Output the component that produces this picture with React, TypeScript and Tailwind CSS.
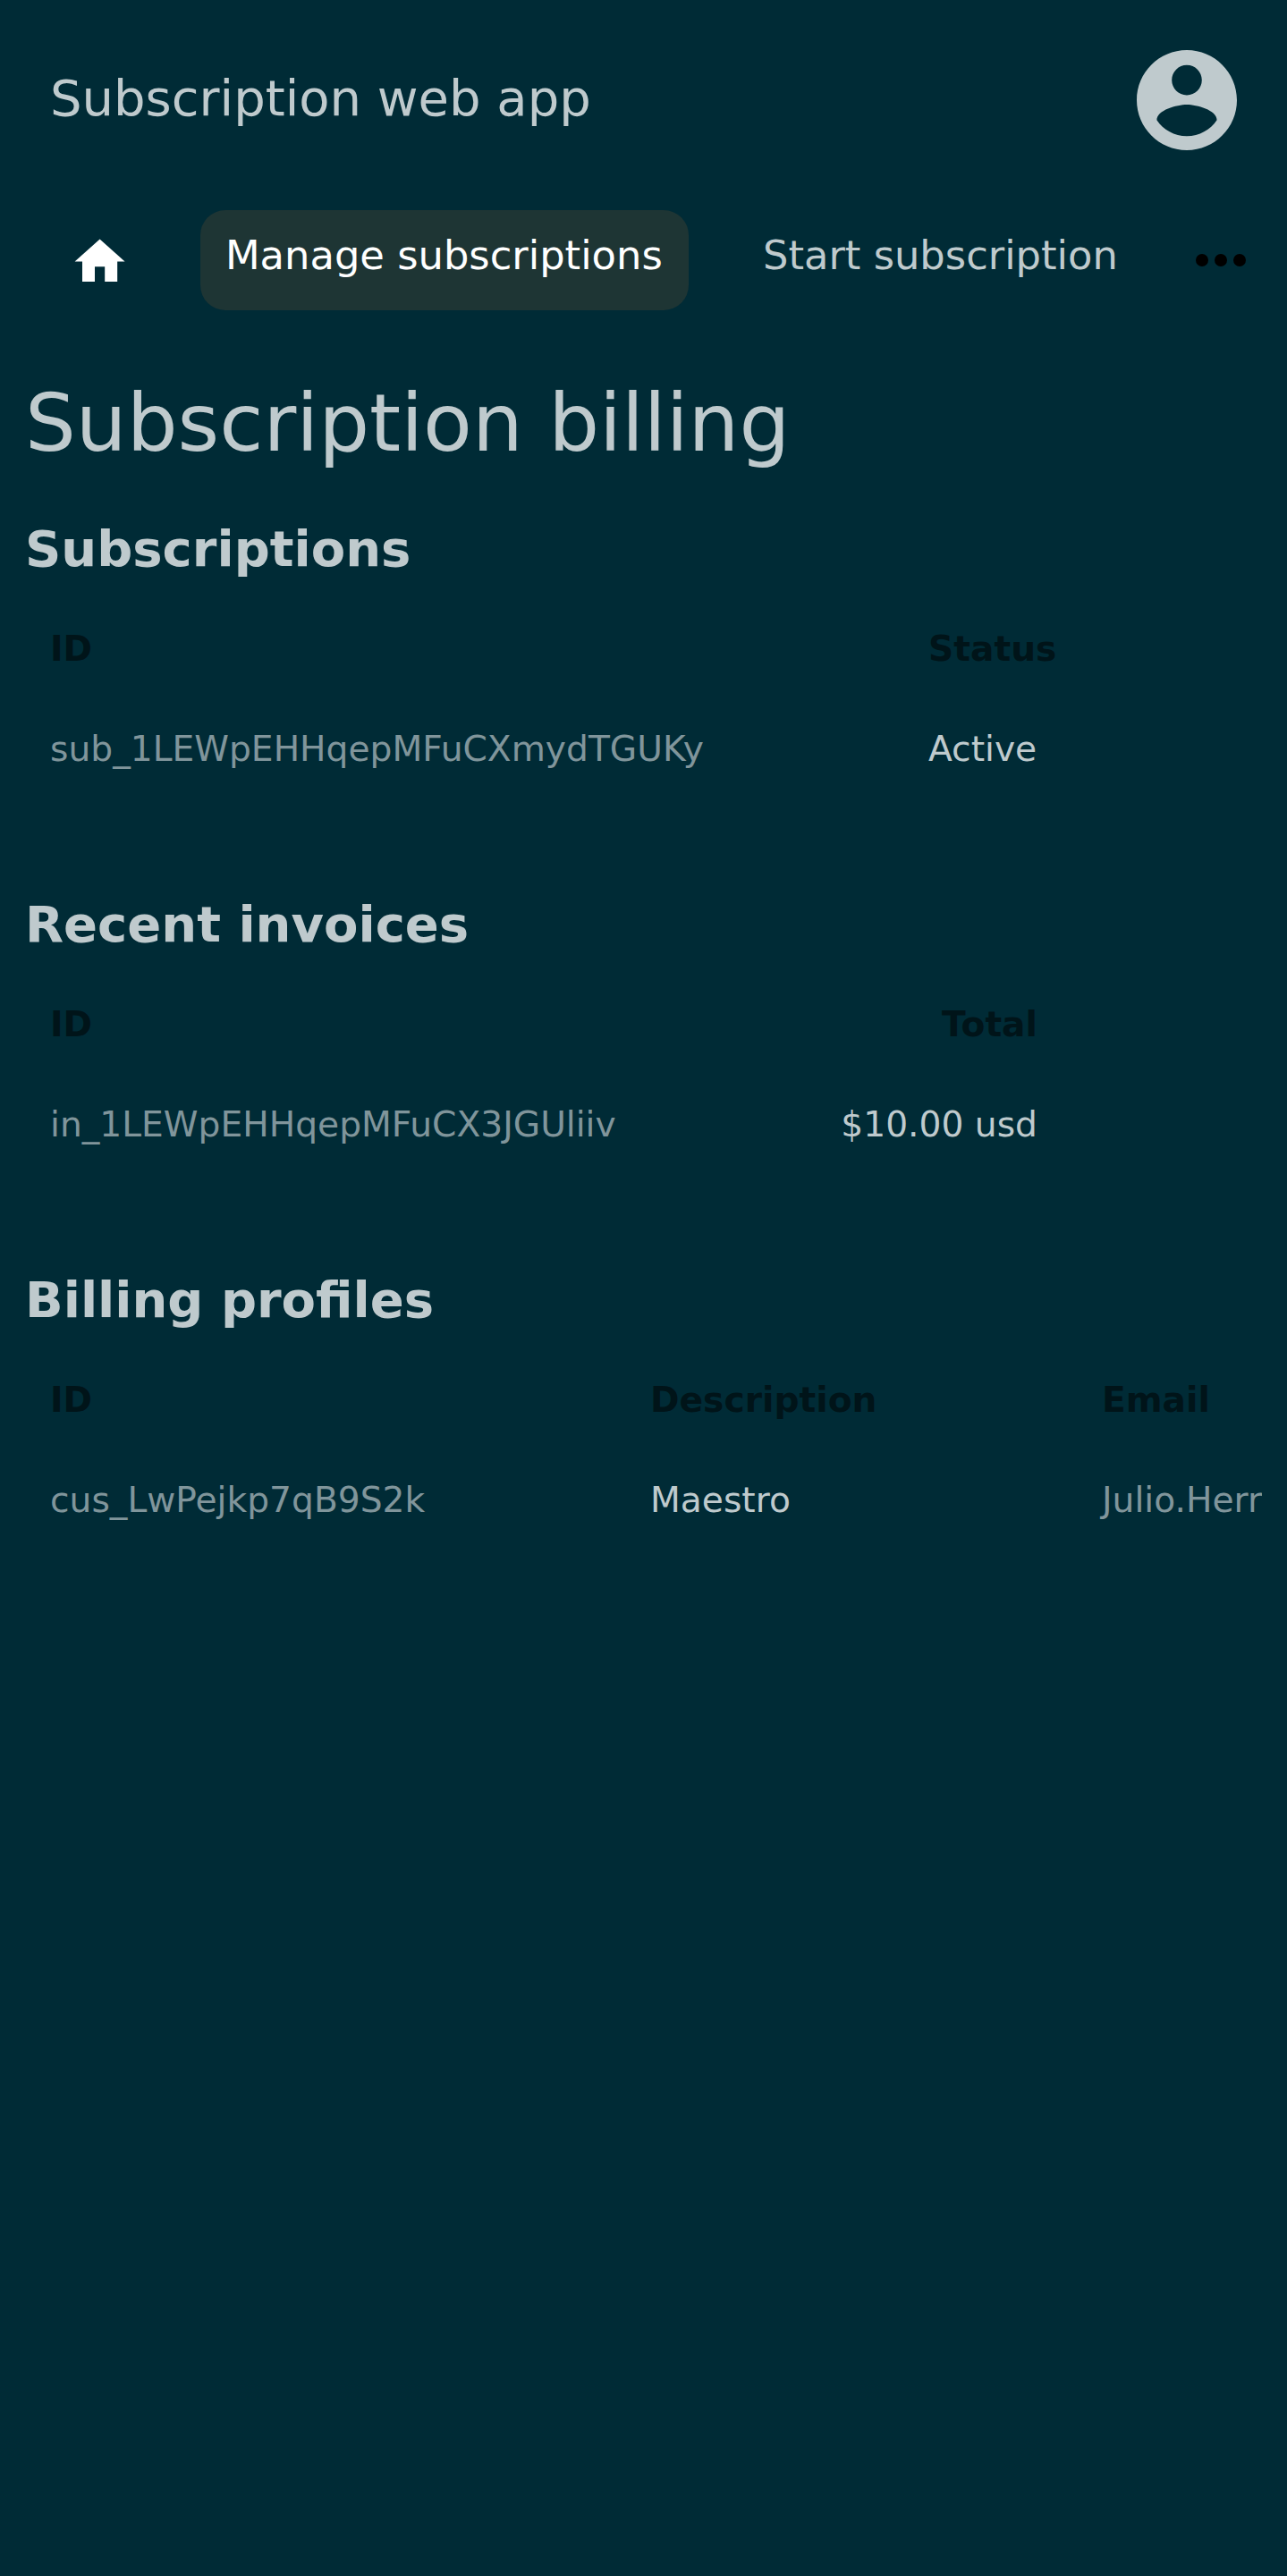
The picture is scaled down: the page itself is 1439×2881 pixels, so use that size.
import type { ReactNode } from 'react';

function Section({ title, columns, children }: { title: string; columns: string; children: ReactNode }) {
  return (
    <section className="mb-[84px]">
      <h2 className="h-[112px] pt-[13px] text-[56px] leading-[84px] font-bold">{title}</h2>
      <div className="overflow-hidden">
        <div className={`grid auto-rows-[112px] text-[39.2px] leading-[59px] whitespace-nowrap *:px-[28px] *:pt-[25px] ${columns}`}>
          {children}
        </div>
      </div>
    </section>
  );
}

const Head = ({ children, right }: { children: ReactNode; right?: boolean }) => (
  <div className={`font-bold text-[#001419] ${right ? 'text-right' : ''}`}>{children}</div>
);

const Muted = ({ children }: { children: ReactNode }) => <div className="text-[#80959b]">{children}</div>;

export default function App() {
  return (
    <div className="h-[2881px] overflow-hidden bg-[#002b36] font-['DejaVu_Sans',sans-serif] text-[#bfcacd]">
      <header className="flex h-[224px] items-center justify-between px-[56px]">
        <div className="pb-[4px] text-[56px] leading-[84px]">Subscription web app</div>
        <svg className="size-[112px]" viewBox="2 2 20 20" fill="currentColor">
          <path d="M12 2C6.48 2 2 6.48 2 12s4.48 10 10 10 10-4.48 10-10S17.52 2 12 2zm0 3c1.66 0 3 1.34 3 3s-1.34 3-3 3-3-1.34-3-3 1.34-3 3-3zm0 14.2c-2.5 0-4.71-1.28-6-3.22.03-1.99 4-3.08 6-3.08 1.99 0 5.97 1.09 6 3.08-1.29 1.94-3.5 3.22-6 3.22z" />
        </svg>
      </header>
      <nav className="flex h-[134px] items-start pt-[10.6px] text-[44.8px] leading-[66px] whitespace-nowrap">
        <svg className="mt-[24px] ml-[78.4px] size-[67.2px] shrink-0 text-white" viewBox="0 0 24 24" fill="currentColor">
          <path d="M10 20v-6h4v6h5v-8h3L12 3 2 12h3v8z" />
        </svg>
        <div className="ml-[78.4px] h-[112px] w-[545.6px] rounded-[28px] bg-[#1e3534] pt-[18.8px] pl-[28px] text-white">Manage subscriptions</div>
        <div className="ml-[83.4px] pt-[18.8px]">Start subscription</div>
        <svg className="mt-[49px] ml-[87px] h-[14px] w-[56px] shrink-0 text-black" viewBox="0 0 56 14" fill="currentColor">
          <circle cx="7" cy="7" r="7" />
          <circle cx="28" cy="7" r="7" />
          <circle cx="49" cy="7" r="7" />
        </svg>
      </nav>
      <main className="px-[28px] pt-[49px]">
        <h1 className="h-[152px] text-[89.6px] leading-[132px]">Subscription billing</h1>
        <Section title="Subscriptions" columns="grid-cols-[982px_1fr]">
          <Head>ID</Head>
          <Head>Status</Head>
          <Muted>sub_1LEWpEHHqepMFuCXmydTGUKy</Muted>
          <div>Active</div>
        </Section>
        <Section title="Recent invoices" columns="grid-cols-[860px_300px]">
          <Head>ID</Head>
          <Head right>Total</Head>
          <Muted>in_1LEWpEHHqepMFuCX3JGUliiv</Muted>
          <div className="text-right">$10.00 usd</div>
        </Section>
        <Section title="Billing profiles" columns="grid-cols-[671px_505px_400px]">
          <Head>ID</Head>
          <Head>Description</Head>
          <Head>Email</Head>
          <Muted>cus_LwPejkp7qB9S2k</Muted>
          <div>Maestro</div>
          <Muted>Julio.Herr</Muted>
        </Section>
      </main>
    </div>
  );
}
